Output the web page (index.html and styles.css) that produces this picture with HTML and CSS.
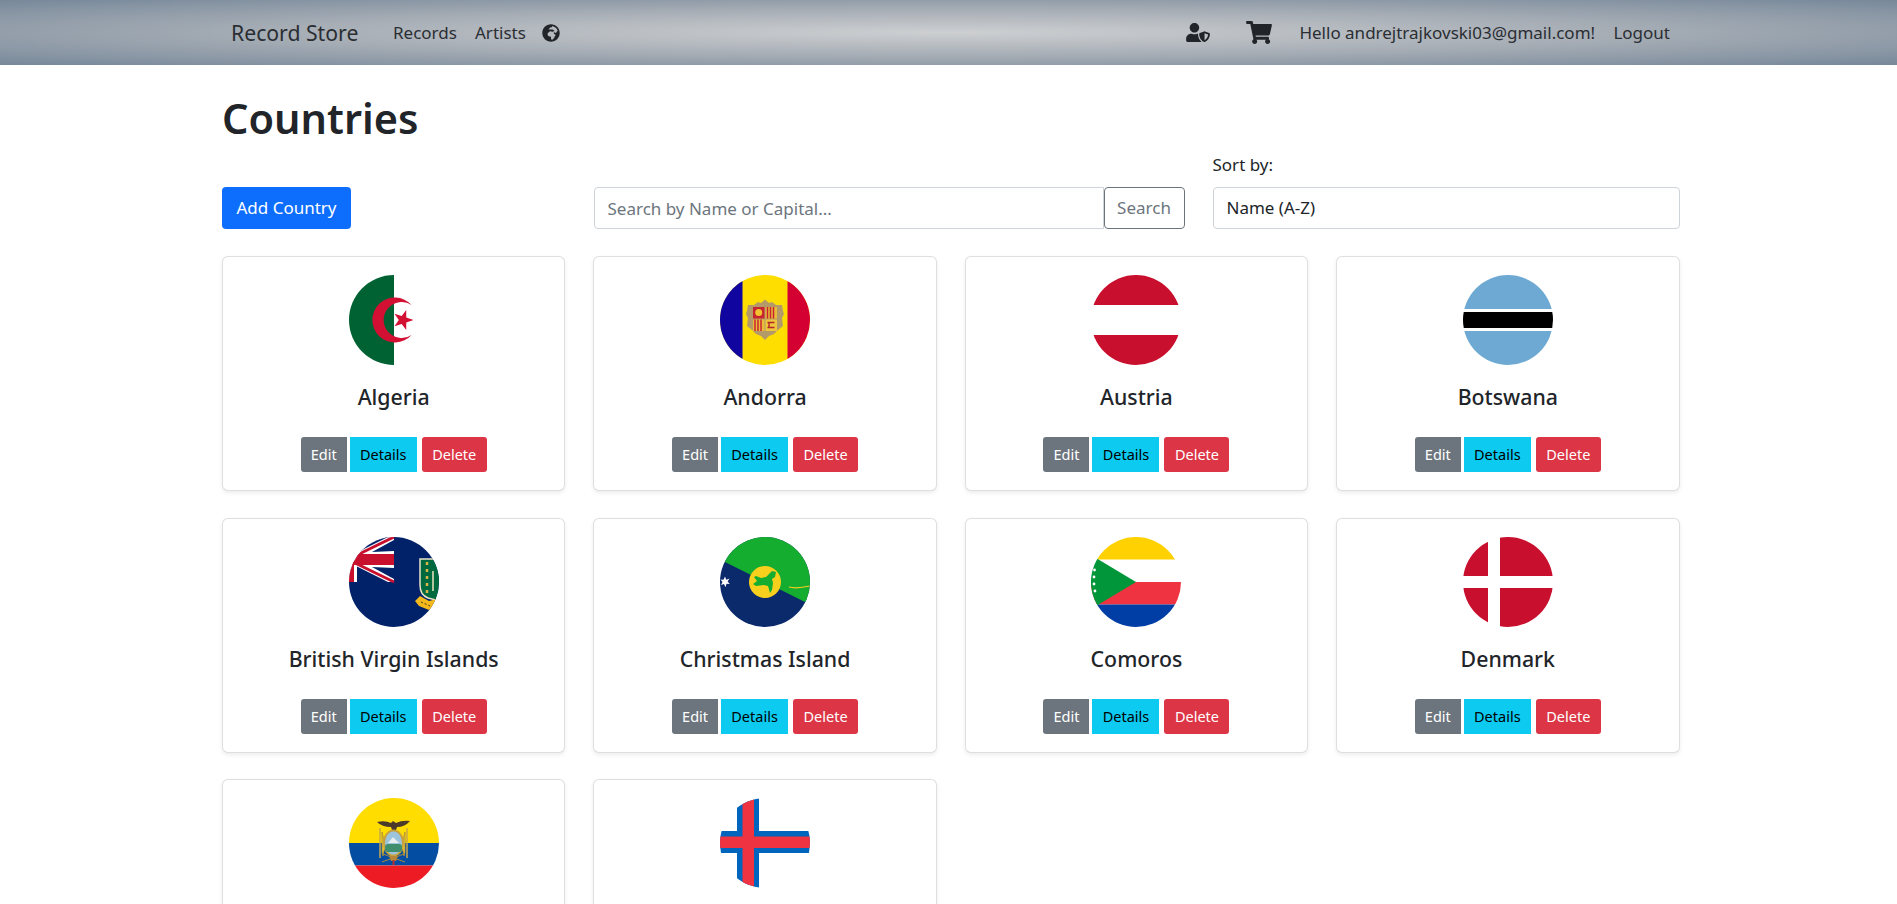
FILE: index.html
```html
<!DOCTYPE html>
<html lang="en">
<head>
<meta charset="utf-8">
<title>Countries - Record Store</title>
<link rel="stylesheet" href="styles.css">
</head>
<body>
<svg class="defs" width="0" height="0" aria-hidden="true">
  <symbol id="i-globe" viewBox="0 0 496 512"><path d="M248 8C111.03 8 0 119.03 0 256s111.03 248 248 248 248-111.03 248-248S384.97 8 248 8zm160 215.5v6.93c0 5.87-3.32 11.24-8.57 13.86l-15.39 7.7a15.485 15.485 0 0 1-15.53-.97l-18.21-12.14a15.52 15.52 0 0 0-13.5-1.81l-2.65.88c-9.7 3.23-13.66 14.79-7.99 23.3l13.24 19.86c2.87 4.31 7.71 6.9 12.89 6.9h8.21c8.56 0 15.5 6.94 15.5 15.5v11.34c0 3.35-1.09 6.62-3.1 9.3l-18.74 24.98c-1.42 1.9-2.39 4.1-2.83 6.43l-4.3 22.83c-.62 3.29-2.29 6.29-4.76 8.56a159.608 159.608 0 0 0-25 29.16l-13.03 19.55a27.756 27.756 0 0 1-23.09 12.36c-10.51 0-20.12-5.94-24.82-15.34a78.902 78.902 0 0 1-8.33-35.29V367.5c0-8.56-6.94-15.5-15.5-15.5h-25.88c-14.49 0-28.38-5.76-38.63-16a54.659 54.659 0 0 1-16-38.63v-14.06c0-17.19 8.1-33.38 21.85-43.7l27.58-20.69a54.663 54.663 0 0 1 32.78-10.93h.89c8.48 0 16.85 1.97 24.43 5.77l14.72 7.36c3.68 1.84 7.93 2.14 11.83.84l47.31-15.77c6.33-2.11 10.6-8.03 10.6-14.7 0-8.56-6.94-15.5-15.5-15.5h-10.09c-4.11 0-8.05-1.63-10.96-4.54l-6.92-6.92a15.487 15.487 0 0 0-10.96-4.54H199.5c-8.56 0-15.5-6.94-15.5-15.5v-4.4c0-7.11 4.84-13.31 11.74-15.04l14.45-3.61c3.74-.94 7-3.23 9.14-6.44l8.08-12.11c2.87-4.31 7.71-6.9 12.89-6.9h24.21c8.56 0 15.5-6.94 15.5-15.5v-21.7C359.23 71.63 422.86 131.02 441.93 208H423.5c-8.56 0-15.5 6.94-15.5 15.5z"/></symbol>
  <symbol id="i-user" viewBox="0 0 640 512"><path d="M622.3 271.1l-115.2-45c-3.5-1.4-7.3-2.1-11.1-2.1s-7.6.7-11.1 2.1l-115.2 45c-10.7 4.2-17.7 14-17.7 24.9 0 111.6 68.7 188.8 132.9 213.9 7 2.7 14.9 2.7 21.9 0 51.4-20.1 132.9-89.4 132.9-213.9 0-10.9-7-20.7-17.7-24.9zM496 462.4V273.3l95.5 37.3c-5.6 87.1-60.9 135.4-95.5 151.8zM224 256c70.7 0 128-57.3 128-128S294.7 0 224 0 96 57.3 96 128s57.3 128 128 128zm96 40c0-2.5.8-4.8 1.1-7.2-2.5-.1-4.9-.8-7.5-.8h-16.7c-22.2 10.2-46.9 16-72.9 16s-50.6-5.8-72.9-16h-16.7C60.2 288 0 348.2 0 422.4V464c0 26.5 21.5 48 48 48h352c6.8 0 13.3-1.5 19.2-4-54-42.9-99.2-116.7-99.2-212z"/></symbol>
  <symbol id="i-cart" viewBox="0 0 576 512"><path d="M528.12 301.319l47.273-208C578.806 78.301 567.391 64 551.99 64H159.208l-9.166-44.81C147.758 8.021 137.93 0 126.529 0H24C10.745 0 0 10.745 0 24v16c0 13.255 10.745 24 24 24h69.883l70.248 343.435C147.325 417.1 136 435.222 136 456c0 30.928 25.072 56 56 56s56-25.072 56-56c0-15.674-6.447-29.835-16.824-40h209.647C430.447 426.165 424 440.326 424 456c0 30.928 25.072 56 56 56s56-25.072 56-56c0-22.172-12.888-41.332-31.579-50.405l5.517-24.276c3.413-15.018-8.002-29.319-23.403-29.319H218.117l-6.545-32h293.145c11.206 0 20.92-7.754 23.403-18.681z"/></symbol>
</svg>

<nav class="navbar">
  <a class="brand">Record Store</a>
  <a class="nav-link link-records">Records</a>
  <a class="nav-link link-artists">Artists</a>
  <svg class="icon icon-globe"><use href="#i-globe"/></svg>
  <div class="nav-right">
    <svg class="icon icon-user"><use href="#i-user"/></svg>
    <svg class="icon icon-cart"><use href="#i-cart"/></svg>
    <span class="nav-link hello">Hello andrejtrajkovski03@gmail.com!</span>
    <a class="nav-link logout">Logout</a>
  </div>
</nav>

<main class="page">
  <h1 class="title">Countries</h1>
  <div class="toolbar">
    <div><button class="btn-add">Add Country</button></div>
    <div class="search">
      <input class="search-input" type="text" placeholder="Search by Name or Capital...">
      <button class="search-btn">Search</button>
    </div>
    <div class="sort">
      <label class="sort-label">Sort by:</label>
      <div class="select">Name (A-Z)</div>
    </div>
  </div>

  <div class="cards">
    <article class="card">
      <svg class="flag" viewBox="0 0 90 90">
        <rect width="45" height="90" fill="#006233"/>
        <path fill="#d21034" fill-rule="evenodd" d="M62.6 30A22.5 22.5 0 1 0 62.6 60A18 18 0 1 1 62.6 30Z"/>
        <polygon fill="#d21034" points="64.5,45 57.3,47.5 57.2,55 52.7,49 45.5,51.2 49.8,45 45.5,38.8 52.7,41 57.2,35 57.3,42.5"/>
      </svg>
      <h5 class="name">Algeria</h5>
      <div class="actions"><a class="btn edit">Edit</a><a class="btn details">Details</a><a class="btn delete">Delete</a></div>
    </article>

    <article class="card">
      <svg class="flag" viewBox="0 0 90 90">
        <rect width="90" height="90" fill="#fedd00"/>
        <rect width="22.5" height="90" fill="#10069f"/>
        <rect x="67.5" width="22.5" height="90" fill="#d50032"/>
        <path fill="#b39a68" d="M28 30h6l4-3 3 1 4-3.500 4 3.500 3-1 4 3h6l1 6 1 3-2 4 1 8-5 4-4 4-5 2-4 4-4-4-5-2-4-4-5-4 1-8-2-4 1-3z"/>
        <rect x="33" y="32" width="11.500" height="11.500" fill="#c8242f"/>
        <circle cx="38.700" cy="37.500" r="3.500" fill="#f3c32f"/>
        <rect x="45.500" y="32" width="11.500" height="11.500" fill="#e9bb3a"/>
        <path stroke="#c8242f" stroke-width="1.500" d="M47.500 32v11.500M50.500 32v11.500M53.500 32v11.500"/>
        <rect x="33" y="44.500" width="11.500" height="11.500" fill="#e9bb3a"/>
        <path stroke="#c8242f" stroke-width="1.500" d="M35 44.500v11.500M38 44.500v11.500M41 44.500v11.500"/>
        <rect x="45.500" y="44.500" width="11.500" height="11.500" fill="#efc53c"/>
        <path stroke="#b3262b" stroke-width="1.400" fill="none" d="M47.500 47.500h7M47.500 52.500h7M49 47.500v5"/>
      </svg>
      <h5 class="name">Andorra</h5>
      <div class="actions"><a class="btn edit">Edit</a><a class="btn details">Details</a><a class="btn delete">Delete</a></div>
    </article>

    <article class="card">
      <svg class="flag" viewBox="0 0 90 90">
        <rect width="90" height="30" fill="#c8102e"/>
        <rect y="60" width="90" height="30" fill="#c8102e"/>
      </svg>
      <h5 class="name">Austria</h5>
      <div class="actions"><a class="btn edit">Edit</a><a class="btn details">Details</a><a class="btn delete">Delete</a></div>
    </article>

    <article class="card">
      <svg class="flag" viewBox="0 0 90 90">
        <rect width="90" height="34" fill="#6da9d2"/>
        <rect y="56" width="90" height="34" fill="#6da9d2"/>
        <rect y="37" width="90" height="16" fill="#000"/>
      </svg>
      <h5 class="name">Botswana</h5>
      <div class="actions"><a class="btn edit">Edit</a><a class="btn details">Details</a><a class="btn delete">Delete</a></div>
    </article>

    <article class="card">
      <svg class="flag" viewBox="0 0 90 90">
        <rect width="90" height="90" fill="#012169"/>
        <rect width="45" height="45" fill="#fff"/>
        <polygon fill="#012169" points="8,0 39,0 8,15.500"/>
        <polygon fill="#012169" points="8,45 39,45 8,29.500"/>
        <polygon fill="#012169" points="45,3 45,14 23,15"/>
        <polygon fill="#012169" points="45,42 45,31 23,30"/>
        <path stroke="#c8102e" stroke-width="3" d="M4 20L45 0M4 25L45 45"/>
        <rect y="17" width="45" height="11" fill="#c8102e"/>
        <rect width="5" height="45" fill="#c8102e"/>
        <path fill="#00693e" stroke="#e9e2c8" stroke-width="1.500" d="M71 22h20v42l-12-3q-8-3-8-13z"/>
        <path stroke="#d8b64a" stroke-width="2.500" stroke-dasharray="3 4" d="M78 25v35"/>
        <path stroke="#f2e6c0" stroke-width="1.500" d="M84 34v20"/>
        <path fill="#f2b81c" d="M66 64l5-5 9 5 8-2-2 8-6 3-10-4z"/>
        <path stroke="#4a3a14" stroke-width="1" stroke-dasharray="2 2" d="M72 65l9 4"/>
      </svg>
      <h5 class="name">British Virgin Islands</h5>
      <div class="actions"><a class="btn edit">Edit</a><a class="btn details">Details</a><a class="btn delete">Delete</a></div>
    </article>

    <article class="card">
      <svg class="flag" viewBox="0 0 90 90">
        <rect width="90" height="90" fill="#0a2a6c"/>
        <polygon fill="#14ad2f" points="0,22.500 90,67.500 90,0 0,0"/>
        <circle cx="45" cy="45" r="16" fill="#f7cf1d"/>
        <path fill="#14ad2f" d="M36 39l5 2 5-1 6-6 4 1-1 5-3 2 1 4-1 7-2 3-2-7-4-1-8 1-3-2 4-3-3-4z"/>
        <polygon fill="#fff" points="5,39.500 6.200,42.800 9.500,41.500 7.600,44.500 9.800,47 6.500,46.800 5.500,50.200 4,47 1,48 2.500,45 .5,42.500 3.500,42.800"/>
        <path fill="none" stroke="#f7cf1d" stroke-width="1.200" d="M69 50q7 2 21-1"/>
      </svg>
      <h5 class="name">Christmas Island</h5>
      <div class="actions"><a class="btn edit">Edit</a><a class="btn details">Details</a><a class="btn delete">Delete</a></div>
    </article>

    <article class="card">
      <svg class="flag" viewBox="0 0 90 90">
        <rect width="90" height="22.500" fill="#ffd100"/>
        <rect y="45" width="90" height="22.500" fill="#ef3340"/>
        <rect y="67.500" width="90" height="22.500" fill="#003da5"/>
        <polygon fill="#009639" points="-30,0 45,45 -30,90"/>
        <g fill="#fff"><circle cx="3.500" cy="33" r="1.400"/><circle cx="3" cy="40" r="1.400"/><circle cx="3" cy="47" r="1.400"/><circle cx="4" cy="54" r="1.400"/></g>
      </svg>
      <h5 class="name">Comoros</h5>
      <div class="actions"><a class="btn edit">Edit</a><a class="btn details">Details</a><a class="btn delete">Delete</a></div>
    </article>

    <article class="card">
      <svg class="flag" viewBox="0 0 90 90">
        <g fill="#c8102e">
          <rect width="25" height="39"/>
          <rect x="37" width="53" height="39"/>
          <rect y="51" width="25" height="39"/>
          <rect x="37" y="51" width="53" height="39"/>
        </g>
      </svg>
      <h5 class="name">Denmark</h5>
      <div class="actions"><a class="btn edit">Edit</a><a class="btn details">Details</a><a class="btn delete">Delete</a></div>
    </article>

    <article class="card">
      <svg class="flag" viewBox="0 0 90 90">
        <rect width="90" height="45" fill="#ffdd00"/>
        <rect y="45" width="90" height="22.500" fill="#034ea2"/>
        <rect y="67.500" width="90" height="22.500" fill="#ed1c24"/>
        <path fill="#4b3a2a" d="M28 24q8-2 14 1l2-2 3 2q6-3 14-2-5 6-13 6l-1 3h-4l-1-3q-9 0-14-5z"/>
        <path stroke="#c9a94a" stroke-width="1.500" fill="none" d="M31 30v30M58 30v30"/>
        <path fill="#e9c431" stroke="#a98e3a" stroke-width=".8" d="M33 34q2 8 3 14l-2 10-1-4zM56 34q-2 8-3 14l2 10 1-4z"/>
        <ellipse cx="44.500" cy="45" rx="10.500" ry="13.500" fill="#c9a23d"/>
        <ellipse cx="44.500" cy="45" rx="8.500" ry="11.500" fill="#9cc4dc"/>
        <path fill="#e8eef0" d="M39 45l5-6 6 6z"/>
        <rect x="36" y="46" width="17" height="8" rx="3" fill="#3f8f6f"/>
        <path stroke="#a8893a" stroke-width="1" d="M33 64L55 56M56 64L34 56"/>
        <path fill="#b5853a" d="M40 58h9l-2 5h-5z"/>
        <rect x="43.500" y="62" width="2" height="5" fill="#b5302f"/>
      </svg>
    </article>

    <article class="card">
      <svg class="flag" viewBox="0 0 90 90">
        <rect x="17" width="22" height="90" fill="#0065bd"/>
        <rect y="33" width="90" height="22" fill="#0065bd"/>
        <rect x="22.500" width="11.500" height="90" fill="#ef3340"/>
        <rect y="38.500" width="90" height="11.500" fill="#ef3340"/>
      </svg>
    </article>
  </div>
</main>
</body>
</html>
```

FILE: styles.css
```css
* { box-sizing: border-box; }
html, body { height: 100%; overflow: hidden; }
body {
  margin: 0;
  background: #fff;
  color: #212529;
  font-family: "Noto Sans", "Open Sans", "Liberation Sans", sans-serif;
  font-size: 17px;
  line-height: 24px;
}
.defs { display: block; height: 0; }

.navbar {
  display: flex;
  align-items: center;
  height: 65px;
  padding: 0 227px 0 231px;
  background: radial-gradient(ellipse at center, #cdcfd1 0%, #a6adb5 50%, #77889a 100%);
  color: #2a2e33;
}
.brand { font-size: 21.2px; width: 162px; }
.nav-link { color: #2a2e33; }
.link-records { width: 82px; }
.link-artists { width: 67px; }
.icon { display: block; fill: #212529; }
.icon-globe { width: 18px; height: 18px; }
.nav-right { display: flex; align-items: center; margin-left: auto; }
.icon-user { width: 24px; height: 19px; margin-right: 36px; }
.icon-cart { width: 26px; height: 23px; margin-right: 27px; }
.hello { width: 314px; }

.page { width: 1457.5px; margin-left: 222px; }
.title {
  margin: 0;
  padding-top: 29px;
  height: 88px;
  font-size: 41.5px;
  line-height: 48px;
  font-weight: 600;
}
.toolbar {
  display: grid;
  grid-template-columns: 343.5px 591px 467px;
  column-gap: 28px;
  align-items: end;
}
.btn-add {
  height: 42px;
  width: 129px;
  border: 0;
  border-radius: 4px;
  background: #0d6efd;
  color: #fff;
  font: inherit;
}
.search { display: flex; }
.search-input {
  flex: 1;
  min-width: 0;
  height: 42px;
  padding: 0 13px;
  border: 1px solid #ced4da;
  border-radius: 4px 0 0 4px;
  font: inherit;
  outline: 0;
}
.search-input::placeholder { color: #6c757d; opacity: 1; }
.search-btn {
  width: 81px;
  height: 42px;
  border: 1px solid #6c757d;
  border-radius: 4px;
  background: #fff;
  color: #6c757d;
  font: inherit;
}
.sort-label { display: block; margin-bottom: 10px; }
.select {
  height: 42px;
  padding: 8px 13px;
  border: 1px solid #ced4da;
  border-radius: 4px;
}

.cards {
  display: grid;
  grid-template-columns: repeat(4, 1fr);
  column-gap: 28px;
  row-gap: 26.5px;
  margin-top: 27px;
}
.card {
  display: flex;
  flex-direction: column;
  align-items: center;
  height: 235px;
  padding-top: 18px;
  border: 1px solid rgba(0, 0, 0, 0.125);
  border-radius: 6px;
  box-shadow: 0 2px 4px rgba(0, 0, 0, 0.075);
  background: #fff;
}
.flag { display: block; width: 90px; height: 90px; border-radius: 50%; flex: none; }
.name {
  margin: 20px 0 0;
  font-size: 21.3px;
  line-height: 24px;
  font-weight: 500;
}
.actions { display: flex; margin-top: 28px; }
.btn {
  display: block;
  height: 35px;
  font-size: 14.5px;
  line-height: 35px;
  text-align: center;
}
.edit { width: 46px; background: #6c757d; color: #fff; border-radius: 3px 0 0 3px; }
.details { width: 67px; margin-left: 3px; background: #0dcaf0; color: #000; }
.delete { width: 65px; margin-left: 5px; background: #dc3545; color: #fff; border-radius: 3px; }
```
